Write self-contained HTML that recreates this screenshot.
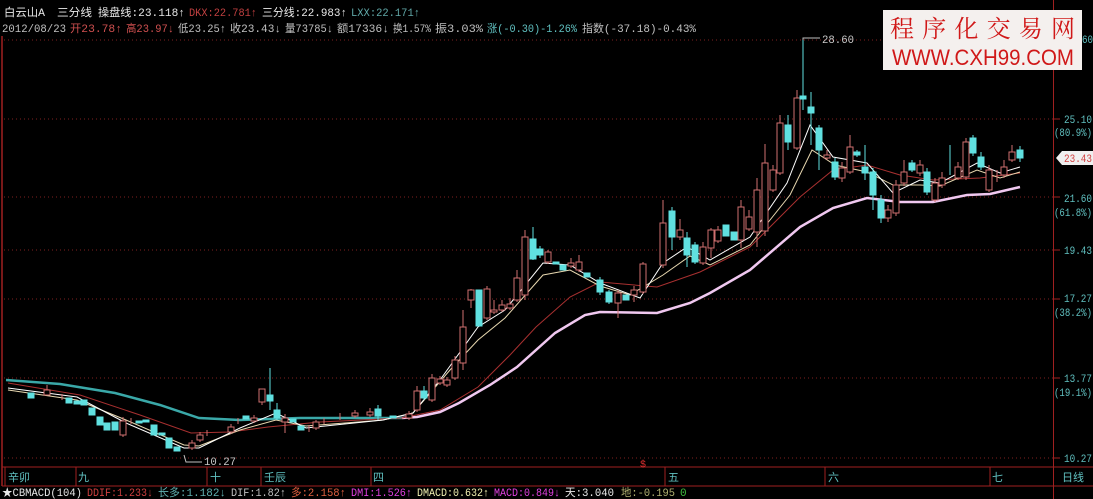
<!DOCTYPE html>
<html><head><meta charset="utf-8"><style>
html,body{margin:0;padding:0;background:#000;overflow:hidden}
svg{display:block}
text{font-family:"Liberation Mono","Noto Sans CJK SC",monospace;font-size:11px}
.cj{font-family:"Liberation Sans","Noto Sans CJK SC",sans-serif}
</style></head><body>
<svg width="1093" height="499" viewBox="0 0 1093 499" xmlns="http://www.w3.org/2000/svg">
<rect width="1093" height="499" fill="#000"/>
<line x1="2" y1="36" x2="2" y2="486" stroke="#a02020" stroke-width="1.5"/>
<line x1="1053.5" y1="0" x2="1053.5" y2="499" stroke="#a02020"/>
<g stroke="#802020" stroke-dasharray="1,3">
<line x1="4" y1="40" x2="1053" y2="40"/><line x1="4" y1="119" x2="1053" y2="119"/>
<line x1="4" y1="197" x2="1053" y2="197"/><line x1="4" y1="250" x2="1053" y2="250"/>
<line x1="4" y1="299" x2="1053" y2="299"/><line x1="4" y1="378" x2="1053" y2="378"/>
<line x1="4" y1="458" x2="1053" y2="458"/>
</g>
<g stroke="#a02020">
<line x1="1053" y1="40" x2="1060" y2="40"/><line x1="1053" y1="119" x2="1060" y2="119"/><line x1="1053" y1="197" x2="1060" y2="197"/><line x1="1053" y1="250" x2="1060" y2="250"/><line x1="1053" y1="299" x2="1060" y2="299"/><line x1="1053" y1="378" x2="1060" y2="378"/><line x1="1053" y1="458" x2="1060" y2="458"/>
</g>
<polyline fill="none" stroke="#3aa8a8" stroke-width="2.5" points="6,380 60,384 115,393 160,405 199,418 240,420 300,418 360,418 402,418"/>
<polyline fill="none" stroke="#f0c8f0" stroke-width="2.5" points="402,418 417,417 440,412 459,403 490,385 517,367 555,333 585,315 600,312 657,313 690,303 710,293 750,270 800,227 833,208 867,198 900,202 933,202 967,195 990,194 1020,187"/>
<polyline fill="none" stroke="#a83030" stroke-width="1" points="8,383 80,395 140,415 191,433 230,432 268,427 320,422 402,418 440,410 478,387 510,355 536,327 570,297 600,282 657,287 700,272 750,247 800,197 833,170 867,165 900,175 933,180 980,178 1020,173"/>
<polyline fill="none" stroke="#e8d8b0" stroke-width="1" points="8,390 77,400 126,420 184,445 199,446 240,430 276,420 306,426 383,420 413,413 450,370 478,340 505,318 543,275 570,270 600,286 630,295 663,275 690,256 710,265 750,245 790,195 812,150 835,165 867,172 893,185 920,185 940,186 977,170 1000,178 1020,172"/>
<polyline fill="none" stroke="#ffffff" stroke-width="1" points="8,388 77,397 126,423 184,448 199,448 240,428 276,413 306,428 383,420 413,413 440,380 478,327 505,310 543,263 570,265 600,283 640,298 663,263 687,247 710,260 750,237 787,183 810,125 833,157 867,163 893,193 920,180 940,183 977,163 1000,173 1020,167"/>
<g stroke="#d07070" fill="#000" stroke-width="1">
<path d="M47 385V395M62 394V400M123 417V437M131 418V424M192 440V450M200 432V442M207 430V436M231 424V434M238 418V424M254 415V423M262 389V405M285 414V433M309 425V432M316 420V430M324 418V424M340 413V420M355 410V418M370 408V417M409 411V420M417 386V412M432 374V402M440 376V385M447 377V387M455 356V380M463 310V370M471 289V308M487 286V320M494 300V314M502 300V312M510 298V310M517 270V302M525 230V300M548 250V264M571 258V268M579 255V272M618 290V318M634 286V302M643 262V294M663 200V268M680 219V240M703 242V265M711 228V258M718 226V243M741 200V248M749 210V231M757 178V247M765 144V236M773 165V192M780 115V175M797 90V150M827 150V160M842 162V182M850 135V174M888 205V222M896 180V216M904 160V186M920 160V176M935 178V202M942 172V188M958 162V180M966 138V180M989 165V192M997 170V182M1004 160V178M1012 145V162"/>
<rect x="44" y="390" width="6" height="5"/><rect x="120" y="421" width="6" height="14"/><rect x="189" y="443" width="6" height="5"/><rect x="197" y="435" width="6" height="5"/><rect x="228" y="427" width="6" height="5"/><rect x="251" y="418" width="6" height="3"/><rect x="259" y="389" width="6" height="13"/><rect x="282" y="418" width="6" height="4"/><rect x="313" y="422" width="6" height="6"/><rect x="352" y="413" width="6" height="3"/><rect x="367" y="412" width="6" height="3"/><rect x="406" y="414" width="6" height="4"/><rect x="414" y="391" width="6" height="19"/><rect x="429" y="378" width="6" height="22"/><rect x="437" y="379" width="6" height="4"/><rect x="444" y="380" width="6" height="5"/><rect x="452" y="360" width="6" height="18"/><rect x="460" y="327" width="6" height="36"/><rect x="468" y="290" width="6" height="10"/><rect x="484" y="289" width="6" height="29"/><rect x="491" y="310" width="6" height="2"/><rect x="499" y="305" width="6" height="5"/><rect x="507" y="304" width="6" height="4"/><rect x="514" y="278" width="6" height="22"/><rect x="522" y="237" width="6" height="58"/><rect x="545" y="252" width="6" height="10"/><rect x="568" y="263" width="6" height="3"/><rect x="576" y="262" width="6" height="8"/><rect x="615" y="293" width="6" height="10"/><rect x="631" y="290" width="6" height="5"/><rect x="640" y="264" width="6" height="28"/><rect x="660" y="223" width="6" height="42"/><rect x="677" y="230" width="6" height="7"/><rect x="700" y="247" width="6" height="16"/><rect x="708" y="230" width="6" height="18"/><rect x="715" y="230" width="6" height="11"/><rect x="738" y="207" width="6" height="33"/><rect x="746" y="217" width="6" height="12"/><rect x="754" y="190" width="6" height="42"/><rect x="762" y="163" width="6" height="68"/><rect x="770" y="170" width="6" height="20"/><rect x="777" y="123" width="6" height="50"/><rect x="794" y="98" width="6" height="50"/><rect x="824" y="155" width="6" height="3"/><rect x="839" y="168" width="6" height="10"/><rect x="847" y="147" width="6" height="25"/><rect x="885" y="210" width="6" height="8"/><rect x="893" y="185" width="6" height="28"/><rect x="901" y="172" width="6" height="11"/><rect x="917" y="165" width="6" height="8"/><rect x="932" y="183" width="6" height="17"/><rect x="939" y="178" width="6" height="7"/><rect x="955" y="167" width="6" height="11"/><rect x="963" y="142" width="6" height="35"/><rect x="986" y="170" width="6" height="20"/><rect x="1001" y="167" width="6" height="8"/><rect x="1009" y="152" width="6" height="8"/>
</g>
<g stroke="#60e0e0" fill="#60e0e0" stroke-width="1">
<path d="M270 368V410M277 403V420M378 405V420M424 386V400M533 227V260M540 246V258M600 277V295M609 290V304M672 207V250M687 232V267M695 242V264M788 115V150M803 40V110M811 92V145M819 125V170M835 158V180M857 150V157M865 145V180M873 168V210M881 195V223M912 160V172M927 168V195M950 145V175M973 135V156M981 152V170M1020 146V162"/>
<rect x="28" y="393" width="6" height="5"/><rect x="66" y="398" width="6" height="5"/><rect x="74" y="401" width="6" height="3"/><rect x="81" y="400" width="6" height="5"/><rect x="89" y="408" width="6" height="7"/><rect x="97" y="417" width="6" height="8"/><rect x="104" y="423" width="6" height="7"/><rect x="112" y="422" width="6" height="8"/><rect x="136" y="421" width="6" height="2"/><rect x="143" y="420" width="6" height="2"/><rect x="151" y="425" width="6" height="10"/><rect x="159" y="433" width="6" height="2"/><rect x="166" y="438" width="6" height="10"/><rect x="174" y="447" width="6" height="4"/><rect x="243" y="416" width="6" height="3"/><rect x="267" y="395" width="6" height="6"/><rect x="274" y="410" width="6" height="8"/><rect x="290" y="419" width="6" height="3"/><rect x="298" y="426" width="6" height="4"/><rect x="375" y="409" width="6" height="7"/><rect x="390" y="416" width="6" height="2"/><rect x="421" y="391" width="6" height="7"/><rect x="476" y="290" width="6" height="36"/><rect x="530" y="239" width="6" height="20"/><rect x="537" y="249" width="6" height="6"/><rect x="553" y="262" width="6" height="2"/><rect x="560" y="265" width="6" height="5"/><rect x="584" y="273" width="6" height="4"/><rect x="597" y="280" width="6" height="12"/><rect x="606" y="292" width="6" height="10"/><rect x="623" y="295" width="6" height="5"/><rect x="669" y="211" width="6" height="26"/><rect x="684" y="238" width="6" height="17"/><rect x="692" y="245" width="6" height="17"/><rect x="723" y="225" width="6" height="11"/><rect x="731" y="232" width="6" height="8"/><rect x="785" y="125" width="6" height="17"/><rect x="800" y="96" width="6" height="3"/><rect x="808" y="107" width="6" height="6"/><rect x="816" y="128" width="6" height="22"/><rect x="832" y="162" width="6" height="15"/><rect x="854" y="152" width="6" height="3"/><rect x="862" y="167" width="6" height="6"/><rect x="870" y="172" width="6" height="23"/><rect x="878" y="200" width="6" height="18"/><rect x="909" y="163" width="6" height="7"/><rect x="924" y="172" width="6" height="20"/><rect x="970" y="138" width="6" height="15"/><rect x="978" y="157" width="6" height="10"/><rect x="1017" y="150" width="6" height="8"/>
</g>
<polyline points="803,40 803,38 820,38" fill="none" stroke="#c0c0c0"/>
<text x="822" y="43" fill="#c8c8c8" textLength="32" lengthAdjust="spacingAndGlyphs">28.60</text>
<polyline points="184,455 186,462 202,462" fill="none" stroke="#c0c0c0"/>
<text x="204" y="465" fill="#c8c8c8" textLength="32" lengthAdjust="spacingAndGlyphs">10.27</text>
<g fill="#60c0c0">
<text x="1082" y="43" textLength="11" lengthAdjust="spacingAndGlyphs">60</text>
<text x="1064" y="123" textLength="28" lengthAdjust="spacingAndGlyphs">25.10</text><text x="1054" y="136" textLength="38" lengthAdjust="spacingAndGlyphs">(80.9%)</text>
<text x="1064" y="202" textLength="28" lengthAdjust="spacingAndGlyphs">21.60</text><text x="1054" y="216" textLength="38" lengthAdjust="spacingAndGlyphs">(61.8%)</text>
<text x="1064" y="254" textLength="28" lengthAdjust="spacingAndGlyphs">19.43</text>
<text x="1064" y="302" textLength="28" lengthAdjust="spacingAndGlyphs">17.27</text><text x="1054" y="316" textLength="38" lengthAdjust="spacingAndGlyphs">(38.2%)</text>
<text x="1064" y="382" textLength="28" lengthAdjust="spacingAndGlyphs">13.77</text><text x="1054" y="396" textLength="38" lengthAdjust="spacingAndGlyphs">(19.1%)</text>
<text x="1064" y="462" textLength="28" lengthAdjust="spacingAndGlyphs">10.27</text>
</g>
<polygon points="1056,158 1062,151 1093,151 1093,165 1062,165" fill="#f0f0f0"/>
<text x="1064" y="162" fill="#d04040" textLength="28" lengthAdjust="spacingAndGlyphs">23.43</text>
<rect x="883" y="10" width="199" height="60" fill="#f4f0ee"/>
<text x="890" y="37" fill="#d01818" style="font-size:24px;font-family:'Noto Serif CJK SC',serif" textLength="185">程序化交易网</text>
<text x="892" y="65" fill="#d01818" style="font-family:'Liberation Sans',sans-serif;font-size:22px" textLength="182" lengthAdjust="spacingAndGlyphs">WWW.CXH99.COM</text>
<line x1="2" y1="467" x2="1093" y2="467" stroke="#a02020"/>
<line x1="2" y1="486" x2="1093" y2="486" stroke="#a02020"/>
<g stroke="#a02020"><path d="M5 467V486M76 467V486M207 467V486M261 467V486M371 467V486M665 467V486M825 467V486M990 467V486"/></g>
<text x="640" y="467" fill="#e03030" style="font-size:10px">$</text>
<g fill="#60c0c0" class="cj" style="font-size:12px">
<text x="8" y="481">辛卯</text><text x="78" y="481">九</text><text x="210" y="481">十</text><text x="264" y="481">壬辰</text><text x="373" y="481">四</text><text x="668" y="481">五</text><text x="828" y="481">六</text><text x="992" y="481">七</text><text x="1062" y="481">日线</text>
</g>
<g class="cj" style="font-size:11px">
<text x="4" y="16" fill="#e8e8e8" textLength="41" lengthAdjust="spacingAndGlyphs">白云山A</text>
<text x="57" y="16" fill="#e8e8e8" textLength="35" lengthAdjust="spacingAndGlyphs">三分线</text>
<text x="98" y="16" fill="#e8e8e8" textLength="87" lengthAdjust="spacingAndGlyphs">操盘线:23.118↑</text>
<text x="189" y="16" fill="#c04040" textLength="68" lengthAdjust="spacingAndGlyphs">DKX:22.781↑</text>
<text x="262" y="16" fill="#e8e8e8" textLength="85" lengthAdjust="spacingAndGlyphs">三分线:22.983↑</text>
<text x="351" y="16" fill="#60a8a8" textLength="69" lengthAdjust="spacingAndGlyphs">LXX:22.171↑</text>
<text x="2" y="32" fill="#c0c0c0" textLength="64" lengthAdjust="spacingAndGlyphs">2012/08/23</text>
<text x="70" y="32" fill="#d05050" textLength="52" lengthAdjust="spacingAndGlyphs">开23.78↑</text>
<text x="126" y="32" fill="#d05050" textLength="48" lengthAdjust="spacingAndGlyphs">高23.97↓</text>
<text x="178" y="32" fill="#c0c0c0" textLength="48" lengthAdjust="spacingAndGlyphs">低23.25↑</text>
<text x="230" y="32" fill="#c0c0c0" textLength="51" lengthAdjust="spacingAndGlyphs">收23.43↓</text>
<text x="285" y="32" fill="#c0c0c0" textLength="48" lengthAdjust="spacingAndGlyphs">量73785↓</text>
<text x="337" y="32" fill="#c0c0c0" textLength="52" lengthAdjust="spacingAndGlyphs">额17336↓</text>
<text x="393" y="32" fill="#c0c0c0" textLength="38" lengthAdjust="spacingAndGlyphs">换1.57%</text>
<text x="435" y="32" fill="#c0c0c0" textLength="48" lengthAdjust="spacingAndGlyphs">振3.03%</text>
<text x="487" y="32" fill="#60c0c0" textLength="90" lengthAdjust="spacingAndGlyphs">涨(-0.30)-1.26%</text>
<text x="582" y="32" fill="#c0c0c0" textLength="114" lengthAdjust="spacingAndGlyphs">指数(-37.18)-0.43%</text>
</g>
<g class="cj" style="font-size:11px">
<text x="2" y="496" fill="#e8e8e8" textLength="80" lengthAdjust="spacingAndGlyphs">★CBMACD(104)</text>
<text x="87" y="496" fill="#d04040" textLength="66" lengthAdjust="spacingAndGlyphs">DDIF:1.233↓</text>
<text x="158" y="496" fill="#60b0b0" textLength="68" lengthAdjust="spacingAndGlyphs">长多:1.182↓</text>
<text x="231" y="496" fill="#c0c0c0" textLength="55" lengthAdjust="spacingAndGlyphs">DIF:1.82↑</text>
<text x="291" y="496" fill="#e06040" textLength="55" lengthAdjust="spacingAndGlyphs">多:2.158↑</text>
<text x="351" y="496" fill="#e040e0" textLength="61" lengthAdjust="spacingAndGlyphs">DMI:1.526↑</text>
<text x="417" y="496" fill="#f0f0b0" textLength="72" lengthAdjust="spacingAndGlyphs">DMACD:0.632↑</text>
<text x="494" y="496" fill="#e040e0" textLength="66" lengthAdjust="spacingAndGlyphs">MACD:0.849↓</text>
<text x="565" y="496" fill="#e8e8e8" textLength="49" lengthAdjust="spacingAndGlyphs">天:3.040</text>
<text x="621" y="496" fill="#b0b070" textLength="54" lengthAdjust="spacingAndGlyphs">地:-0.195</text>
<text x="680" y="496" fill="#40c040">0</text>
</g>
</svg>
</body></html>
